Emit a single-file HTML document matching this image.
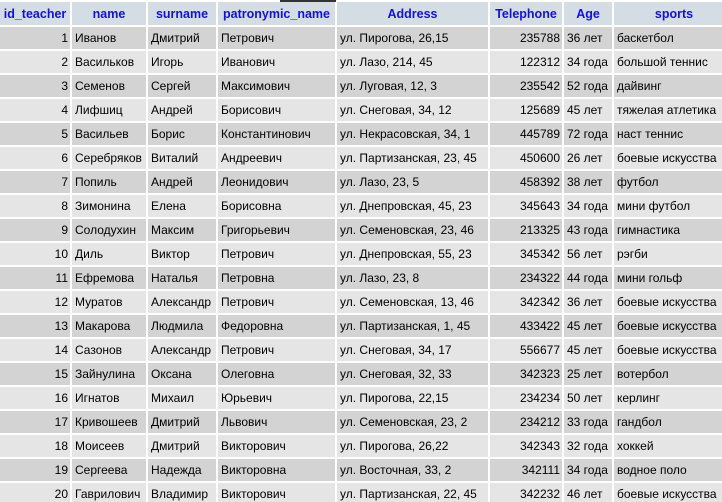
<!DOCTYPE html>
<html><head><meta charset="utf-8"><style>
html,body{margin:0;padding:0;background:#fff;width:722px;height:502px;overflow:hidden;position:relative}
.bar{position:absolute;left:280px;top:0;width:56px;height:2px;background:#333}
table{position:absolute;left:-2px;top:0;width:738px;border-collapse:separate;border-spacing:2px;table-layout:fixed;font-family:"Liberation Sans","DejaVu Sans",sans-serif;font-size:12px;color:#000}
th{background:#d4dce4;color:#1010ee;font-weight:bold;height:23px;padding:0 1px;text-align:center;white-space:nowrap;overflow:hidden;font-size:12.5px}
td{height:22px;padding:0 2px 0 3px;white-space:nowrap;overflow:hidden}
tr.o td{background:#d3d3d3}
tr.e td{background:#e5e5e5}
td.r{text-align:right;padding-right:2px}
</style></head><body>
<div class="bar"></div>
<table>
<colgroup><col style="width:70px"><col style="width:74px"><col style="width:68px"><col style="width:117px"><col style="width:151px"><col style="width:72px"><col style="width:48px"><col style="width:120px"></colgroup>
<tr><th>id_teacher</th><th>name</th><th>surname</th><th>patronymic_name</th><th>Address</th><th>Telephone</th><th>Age</th><th>sports</th></tr>
<tr class="o"><td class="r">1</td><td>Иванов</td><td>Дмитрий</td><td>Петрович</td><td>ул. Пирогова, 26,15</td><td class="r">235788</td><td>36 лет</td><td>баскетбол</td></tr>
<tr class="e"><td class="r">2</td><td>Васильков</td><td>Игорь</td><td>Иванович</td><td>ул. Лазо, 214, 45</td><td class="r">122312</td><td>34 года</td><td>большой теннис</td></tr>
<tr class="o"><td class="r">3</td><td>Семенов</td><td>Сергей</td><td>Максимович</td><td>ул. Луговая, 12, 3</td><td class="r">235542</td><td>52 года</td><td>дайвинг</td></tr>
<tr class="e"><td class="r">4</td><td>Лифшиц</td><td>Андрей</td><td>Борисович</td><td>ул. Снеговая, 34, 12</td><td class="r">125689</td><td>45 лет</td><td>тяжелая атлетика</td></tr>
<tr class="o"><td class="r">5</td><td>Васильев</td><td>Борис</td><td>Константинович</td><td>ул. Некрасовская, 34, 1</td><td class="r">445789</td><td>72 года</td><td>наст теннис</td></tr>
<tr class="e"><td class="r">6</td><td>Серебряков</td><td>Виталий</td><td>Андреевич</td><td>ул. Партизанская, 23, 45</td><td class="r">450600</td><td>26 лет</td><td>боевые искусства</td></tr>
<tr class="o"><td class="r">7</td><td>Попиль</td><td>Андрей</td><td>Леонидович</td><td>ул. Лазо, 23, 5</td><td class="r">458392</td><td>38 лет</td><td>футбол</td></tr>
<tr class="e"><td class="r">8</td><td>Зимонина</td><td>Елена</td><td>Борисовна</td><td>ул. Днепровская, 45, 23</td><td class="r">345643</td><td>34 года</td><td>мини футбол</td></tr>
<tr class="o"><td class="r">9</td><td>Солодухин</td><td>Максим</td><td>Григорьевич</td><td>ул. Семеновская, 23, 46</td><td class="r">213325</td><td>43 года</td><td>гимнастика</td></tr>
<tr class="e"><td class="r">10</td><td>Диль</td><td>Виктор</td><td>Петрович</td><td>ул. Днепровская, 55, 23</td><td class="r">345342</td><td>56 лет</td><td>рэгби</td></tr>
<tr class="o"><td class="r">11</td><td>Ефремова</td><td>Наталья</td><td>Петровна</td><td>ул. Лазо, 23, 8</td><td class="r">234322</td><td>44 года</td><td>мини гольф</td></tr>
<tr class="e"><td class="r">12</td><td>Муратов</td><td>Александр</td><td>Петрович</td><td>ул. Семеновская, 13, 46</td><td class="r">342342</td><td>36 лет</td><td>боевые искусства</td></tr>
<tr class="o"><td class="r">13</td><td>Макарова</td><td>Людмила</td><td>Федоровна</td><td>ул. Партизанская, 1, 45</td><td class="r">433422</td><td>45 лет</td><td>боевые искусства</td></tr>
<tr class="e"><td class="r">14</td><td>Сазонов</td><td>Александр</td><td>Петрович</td><td>ул. Снеговая, 34, 17</td><td class="r">556677</td><td>45 лет</td><td>боевые искусства</td></tr>
<tr class="o"><td class="r">15</td><td>Зайнулина</td><td>Оксана</td><td>Олеговна</td><td>ул. Снеговая, 32, 33</td><td class="r">342323</td><td>25 лет</td><td>вотербол</td></tr>
<tr class="e"><td class="r">16</td><td>Игнатов</td><td>Михаил</td><td>Юрьевич</td><td>ул. Пирогова, 22,15</td><td class="r">234234</td><td>50 лет</td><td>керлинг</td></tr>
<tr class="o"><td class="r">17</td><td>Кривошеев</td><td>Дмитрий</td><td>Львович</td><td>ул. Семеновская, 23, 2</td><td class="r">234212</td><td>33 года</td><td>гандбол</td></tr>
<tr class="e"><td class="r">18</td><td>Моисеев</td><td>Дмитрий</td><td>Викторович</td><td>ул. Пирогова, 26,22</td><td class="r">342343</td><td>32 года</td><td>хоккей</td></tr>
<tr class="o"><td class="r">19</td><td>Сергеева</td><td>Надежда</td><td>Викторовна</td><td>ул. Восточная, 33, 2</td><td class="r">342111</td><td>34 года</td><td>водное поло</td></tr>
<tr class="e"><td class="r">20</td><td>Гаврилович</td><td>Владимир</td><td>Викторович</td><td>ул. Партизанская, 22, 45</td><td class="r">342232</td><td>46 лет</td><td>боевые искусства</td></tr>
</table>
</body></html>
